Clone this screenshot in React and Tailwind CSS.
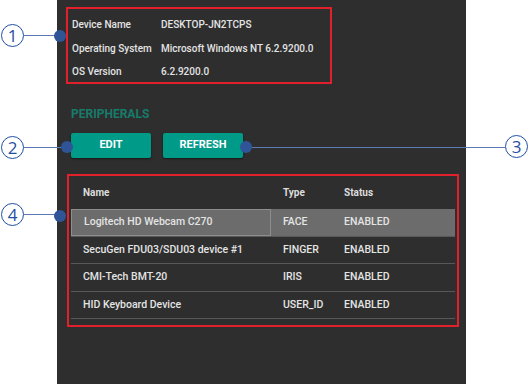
import React from 'react';

const info = [
  ['Device Name', 'DESKTOP-JN2TCPS'],
  ['Operating System', 'Microsoft Windows NT 6.2.9200.0'],
  ['OS Version', '6.2.9200.0'],
];

const devices = [
  { name: 'Logitech HD Webcam C270', type: 'FACE', status: 'ENABLED', selected: true },
  { name: 'SecuGen FDU03/SDU03 device #1', type: 'FINGER', status: 'ENABLED' },
  { name: 'CMI-Tech BMT-20', type: 'IRIS', status: 'ENABLED' },
  { name: 'HID Keyboard Device', type: 'USER_ID', status: 'ENABLED' },
];

// numbered callout: circle + leader line + dot
function Callout({ n, className, lineClass, dotClass }) {
  return (
    <>
      <div
        className={`absolute w-[23px] h-[23px] rounded-full border-[1.5px] border-[#1f4fa3] bg-white flex items-center justify-center text-[17px] font-normal leading-none text-[#1f4fa3] ${className}`}
        style={{ fontFamily: '"Open Sans", "Noto Sans", sans-serif' }}
      >
        {n}
      </div>
      <div className={`absolute h-px bg-[#5b7bb5] ${lineClass}`} />
      <div className={`absolute w-[12px] h-[12px] rounded-full bg-[#2f5597] ${dotClass}`} />
    </>
  );
}

export default function App() {
  return (
    <div className="relative w-[529px] h-[384px] bg-white overflow-hidden" style={{ fontFamily: 'Roboto, "Liberation Sans", sans-serif' }}>
      <div className="ml-[57px] w-[409px] h-full bg-[#2e2e2e] pl-[9px] pt-[7px] flex flex-col">
        {/* device info */}
        <div className="w-[266px] h-[77px] border-2 border-[#e2202b] pl-[4px] pt-[4px]">
          {info.map(([k, v]) => (
            <div key={k} className="flex items-center h-[23.5px] text-[10px] font-medium text-[#e4e4e4]">
              <span className="w-[89px] shrink-0">{k}</span>
              <span>{v}</span>
            </div>
          ))}
        </div>

        <div className="mt-[24px] pl-[5px] text-[12px] font-bold text-[#177b6b] leading-none">PERIPHERALS</div>

        <div className="mt-[13px] pl-[5px] flex gap-[12px]">
          <button className="w-[80px] h-[25px] rounded-[2px] bg-[#009b88] text-white text-[11px] font-bold shadow-[0_1px_2px_rgba(0,0,0,0.5)]">EDIT</button>
          <button className="w-[80px] h-[25px] rounded-[2px] bg-[#009b88] text-white text-[11px] font-bold shadow-[0_1px_2px_rgba(0,0,0,0.5)]">REFRESH</button>
        </div>

        {/* peripherals table */}
        <div className="mt-[16px] ml-[1px] w-[392px] h-[153px] border-2 border-[#e2202b] px-[2px]">
          <div className="flex h-[33px] pt-[9px] text-[10px] font-bold text-[#dcdcdc]">
            <span className="w-[212px] pl-[12px]">Name</span>
            <span className="w-[61px]">Type</span>
            <span>Status</span>
          </div>
          {devices.map((d) => (
            <div
              key={d.name}
              className={`flex items-center h-[27.5px] border-b border-[#585858] text-[10.5px] font-medium text-[#e4e4e4] ${d.selected ? 'bg-[#6c6c6c]' : ''}`}
            >
              <span className={`w-[200px] h-full flex items-center pl-[12px] ${d.selected ? 'border border-[#8e8e8e]' : ''}`}>{d.name}</span>
              <span className="w-[61px] pl-[12px] box-content">{d.type}</span>
              <span>{d.status}</span>
            </div>
          ))}
        </div>
      </div>

      <Callout n="1" className="left-[1px] top-[24px]" lineClass="left-[24px] top-[35px] w-[33px]" dotClass="left-[54px] top-[30px]" />
      <Callout n="2" className="left-[1px] top-[136px]" lineClass="left-[24px] top-[147px] w-[39px]" dotClass="left-[61px] top-[141px]" />
      <Callout n="3" className="left-[505px] top-[135px]" lineClass="left-[246px] top-[147px] w-[259px]" dotClass="left-[240px] top-[141px]" />
      <Callout n="4" className="left-[1px] top-[203px]" lineClass="left-[24px] top-[214px] w-[33px]" dotClass="left-[54px] top-[210px]" />
    </div>
  );
}
